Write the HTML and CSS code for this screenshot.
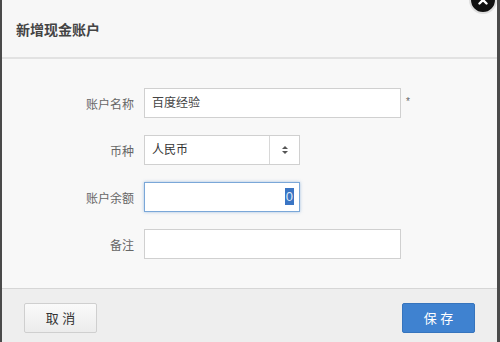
FILE: index.html
```html
<!DOCTYPE html>
<html lang="zh-CN">
<head>
    <meta charset="UTF-8">
    <title>新增现金账户</title>
    <link rel="stylesheet" href="styles.css">
</head>
<body>
    <div class="modal">
        <div class="modal-header">
            <h3>新增现金账户</h3>
        </div>
        <a class="close-btn">
            <svg width="10" height="10" viewBox="0 0 10 10">
                <path d="M1.5 1.5 L8.5 8.5 M8.5 1.5 L1.5 8.5" stroke="#fff" stroke-width="2.4" stroke-linecap="round"/>
            </svg>
        </a>

        <div class="modal-body">
            <div class="form-row">
                <label>账户名称</label>
                <div class="field wide">百度经验</div>
                <span class="required">*</span>
            </div>
            <div class="form-row">
                <label>币种</label>
                <div class="select">
                    <span class="select-text">人民币</span>
                    <span class="select-arrows">
                        <i class="up"></i>
                        <i class="down"></i>
                    </span>
                </div>
            </div>
            <div class="form-row">
                <label>账户余额</label>
                <div class="field narrow focus"><span class="sel">0</span></div>
            </div>
            <div class="form-row">
                <label>备注</label>
                <div class="field wide"></div>
            </div>
        </div>

        <div class="modal-footer">
            <button class="btn">取 消</button>
            <button class="btn btn-primary">保 存</button>
        </div>
    </div>
</body>
</html>
```

FILE: styles.css
```css
body {
    margin: 0;
    font-family: "Liberation Sans", Arial, "Noto Sans CJK SC", sans-serif;
    background: #f8f8f8;
}
.modal {
    width: 500px;
    height: 342px;
    box-sizing: border-box;
    border-left: 2px solid #4a4a4a;
    border-right: 3px solid #4a4a4a;
    display: flex;
    flex-direction: column;
    position: relative;
    overflow: hidden;
}
.modal-header {
    height: 57px;
    background: #f7f7f7;
    border-bottom: 2px solid #e2e2e2;
    display: flex;
    align-items: center;
    padding-left: 14px;
}
.modal-header h3 {
    margin: 0;
    font-size: 14px;
    font-weight: bold;
    color: #444;
}
.close-btn {
    position: absolute;
    top: -14px;
    right: 0;
    width: 28px;
    height: 28px;
    border-radius: 50%;
    background: #111;
    border: 2px solid #ddd;
    display: flex;
    align-items: center;
    justify-content: center;
    box-sizing: border-box;
}
.modal-body {
    flex: 1;
    background: #f8f8f8;
    padding-top: 29px;
    display: flex;
    flex-direction: column;
    gap: 17px;
}
.form-row {
    display: flex;
    align-items: center;
    height: 30px;
}
.form-row label {
    width: 132px;
    text-align: right;
    padding-right: 10px;
    font-size: 12px;
    color: #666;
}
.field {
    box-sizing: border-box;
    height: 30px;
    background: #fff;
    border: 1px solid #d0d0d0;
    font-size: 12px;
    color: #444;
    line-height: 28px;
    padding: 0 7px;
}
.field.wide {
    width: 257px;
}
.field.narrow {
    width: 156px;
}
.field.focus {
    border-color: #7aa7d8;
    box-shadow: 0 0 3px rgba(82, 140, 204, 0.5);
    text-align: right;
    padding-right: 5px;
}
.sel {
    background: #3a75c4;
    color: #dfe9f7;
    font-size: 13px;
    padding: 1px 1px;
}
.required {
    margin-left: 5px;
    font-size: 10px;
    color: #666;
    align-self: flex-start;
    margin-top: 8px;
}
.select {
    width: 156px;
    height: 30px;
    box-sizing: border-box;
    background: #fff;
    border: 1px solid #d0d0d0;
    display: flex;
    font-size: 12px;
    color: #333;
}
.select-text {
    flex: 1;
    line-height: 28px;
    padding-left: 7px;
}
.select-arrows {
    width: 29px;
    border-left: 1px solid #d8d8d8;
    display: flex;
    flex-direction: column;
    align-items: center;
    justify-content: center;
    gap: 2px;
}
.select-arrows i {
    width: 0;
    height: 0;
    border-left: 3px solid transparent;
    border-right: 3px solid transparent;
}
.select-arrows .up {
    border-bottom: 3px solid #555;
}
.select-arrows .down {
    border-top: 3px solid #555;
}
.modal-footer {
    height: 53px;
    background: #eeeeee;
    border-top: 1px solid #d6d6d6;
    display: flex;
    justify-content: space-between;
    align-items: center;
    padding: 0 22px;
}
.btn {
    width: 73px;
    height: 30px;
    border: 1px solid #cfcfcf;
    border-radius: 2px;
    background: linear-gradient(#fafafa, #ececec);
    font-family: inherit;
    font-size: 13px;
    color: #333;
    margin-top: 4px;
}
.btn-primary {
    background: #3f82d0;
    border-color: #3674bd;
    color: #fff;
}
```
